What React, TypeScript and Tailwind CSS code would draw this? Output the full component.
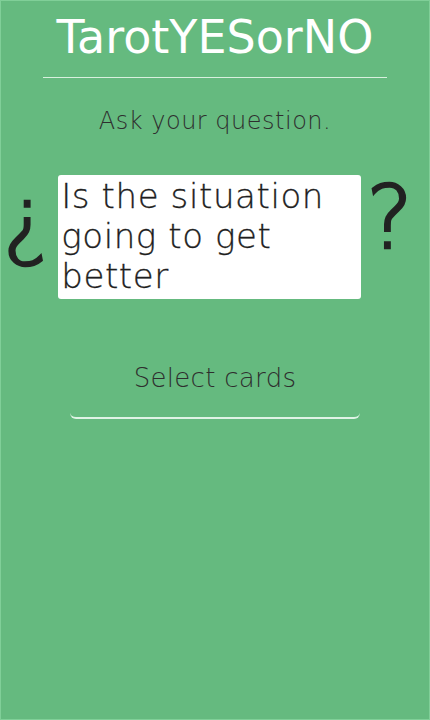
export default function App() {
  return (
    <div
      className="flex h-[720px] w-[430px] flex-col items-center border border-[#80cf98] bg-[#65ba7f] text-[#2a2a2a]"
      style={{ fontFamily: '"DejaVu Sans", "Liberation Sans", sans-serif' }}
    >
      {/* Header */}
      <h1 className="mt-[8px] text-[46px] font-normal leading-[56px] text-white">
        TarotYESorNO
      </h1>
      <div className="mt-[12px] h-px w-[344px] bg-[#d8f0de]" />

      <p className="mt-[27px] text-[24px] font-extralight leading-[32px] tracking-[0.5px] text-[#2e2e2e]">
        Ask your question.
      </p>

      {/* Question */}
      <div className="mt-[38px] flex w-full items-start justify-between pl-[2px] pr-[16px]">
        <span className="mt-[2px] text-[88px] font-extralight leading-[84px] text-[#222] [-webkit-text-stroke:2.5px_#222]">
          ¿
        </span>
        <div className="ml-[3px] h-[124px] w-[303px] rounded-[3px] bg-white px-[3px] pt-[1px] text-[34px] font-extralight leading-[40px] tracking-[0.6px] text-[#1e1e1e] [-webkit-text-stroke:0.3px_#1e1e1e]">
          Is the situation
          <br />
          going to get
          <br />
          better
        </div>
        <span className="mt-[1px] text-[88px] font-extralight leading-[84px] text-[#222] [-webkit-text-stroke:2.5px_#222]">
          ?
        </span>
      </div>

      {/* Button */}
      <button className="mt-[40px] flex h-[80px] w-[290px] items-center justify-center rounded-b-[6px] border-b-2 border-[#dff3e5] text-[26px] font-extralight tracking-[0.3px] text-[#2e2e2e]">
        Select cards
      </button>
    </div>
  );
}
